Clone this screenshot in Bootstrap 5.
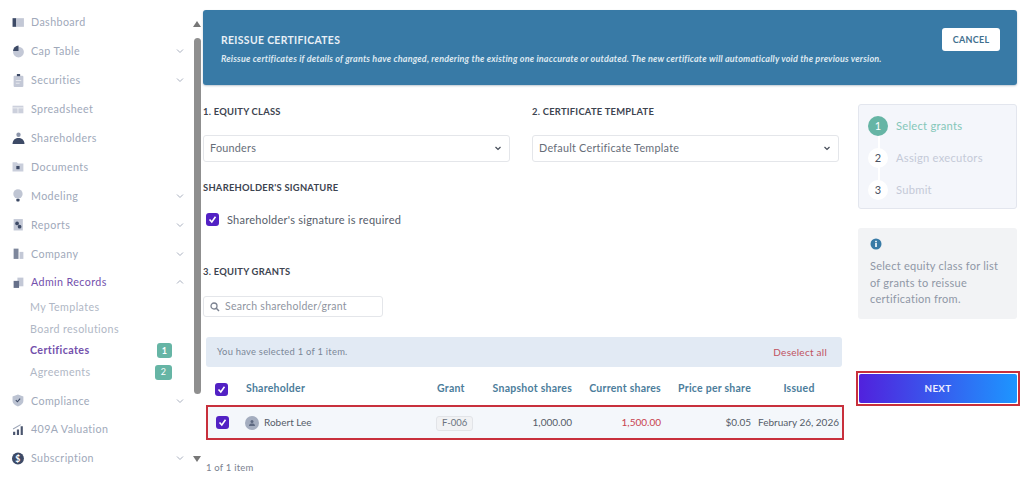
<!DOCTYPE html>
<html lang="en">
<head>
<meta charset="UTF-8">
<title>Reissue Certificates</title>
<link href="https://cdn.jsdelivr.net/npm/bootstrap@5.3.2/dist/css/bootstrap.min.css" rel="stylesheet">
<style>
    html, body { height: 480px; overflow: hidden; }
    body { background: #fff; font-family: "Lato", "Liberation Sans", sans-serif; font-size: 11px; color: #565d6a; letter-spacing: .25px; }
    .sidebar { width: 192px; padding-top: 8px; flex: none; }
    .side-item { height: 28.9px; padding-left: 12px; padding-right: 8px; color: #a0a9ba; font-size: 10.7px; letter-spacing: .4px; }
    .side-item svg.ic { width: 13px; height: 13px; margin-right: 6px; flex: none; }
    .side-item .chev { margin-left: auto; width: 8px; height: 8px; }
    .side-subs { margin-top: -1px; padding-bottom: 3px; }
    .side-sub { height: 21.8px; padding-left: 30px; padding-right: 20px; color: #b0b7c5; font-size: 10.7px; letter-spacing: .4px; }
    .side-active { color: #7350ac; font-weight: 700; }
    .side-admin { color: #7350ac; }
    .side-badge { background: #66b5a5; color: #fff; font-size: 9px; width: 15px; height: 15px; border-radius: 3px; }
    .side-badge-wide { width: 17px; }
    .scrollbar { width: 11px; flex: none; height: 480px; }
    .scrollbar .up { width: 0; height: 0; border: 4.5px solid transparent; border-top: 0; border-bottom: 6px solid #777; margin-top: 21px; margin-left: 1px; }
    .scrollbar .dn { width: 0; height: 0; border: 4.5px solid transparent; border-bottom: 0; border-top: 6px solid #777; margin-top: 62px; margin-left: 1px; }
    .scrollbar .thumb { width: 7px; height: 356px; background: #8f8f8f; border-radius: 4px; margin-top: 11px; margin-left: 2px; }
    .main-area { width: 814px; padding-top: 10px; flex: none; }
    .banner { height: 75px; background: #387aa6; border-radius: 3px; padding: 4px 17px 0 18px; color: #eaf1f6; box-shadow: 0 1px 2px rgba(40,70,100,.3); }
    .banner h1 { font-size: 10.4px; font-weight: 700; letter-spacing: .35px; margin: 0 0 6px; color: #e9f0f6; }
    .banner p { font-size: 9px; font-style: italic; font-weight: 700; margin: 0; letter-spacing: .18px; color: #dfe9f1; }
    .btn-cancel { width: 58px; height: 23px; margin-top: 14px; background: #fff; color: #3f6f8e; font-size: 9px; font-weight: 700; border: 0; border-radius: 3px; padding: 0; letter-spacing: .3px; }
    .left-col { width: 639px; flex: none; }
    .right-col { width: 159px; margin-left: 16px; flex: none; }
    .sec-title { font-size: 9.4px; font-weight: 700; color: #3d4450; margin: 0; letter-spacing: .25px; }
    .form-row-1 { margin-top: 21px; width: 636px; }
    .sec-1 { margin-bottom: 18px; }
    .sec-2 { margin-top: 20px; }
    .sig-row { margin: 18px 0 0 3px; }
    .sec-3 { margin-top: 38px; }
    .sel-box { height: 27px; border: 1px solid #e4e6ea; border-radius: 3px; font-size: 10.8px; padding: 0 7px 1px 6px; color: #666d78; width: 307px; }
    .check { width: 13px; height: 13px; background: #5221c4; border-radius: 3px; flex: none; }
    .check svg { width: 9px; height: 9px; }
    .check-cell { margin-left: 8px; }
    .search-box { width: 180px; height: 21px; margin-top: 19px; margin-bottom: 20px; border: 1px solid #e4e6ea; border-radius: 3px; color: #8f959f; font-size: 10.5px; padding: 0 6px; gap: 5px; }
    .sel-bar { margin-left: 3px; height: 30px; background: #e2eaf4; border-radius: 3px; padding: 0 15px 0 11px; font-size: 9.4px; color: #7b8798; }
    .deselect { color: #c0525f; font-size: 10px; }
    .grants { margin-left: 3px; width: 636px; border-collapse: collapse; table-layout: fixed; }
    .grants th { color: #4c7d9b; font-size: 10.5px; font-weight: 700; height: 39px; white-space: nowrap; padding: 6px 0 0; }
    .grants td { height: 33px; font-size: 10px; letter-spacing: 0; padding: 0; background: #f4f7fb; color: #555c68; white-space: nowrap; }
    .grants .issued { padding-left: 4px; }
    .grants .hl td { border-top: 2px solid #c8303c; border-bottom: 2px solid #c8303c; }
    .grants .hl td:first-child { border-left: 2px solid #c8303c; }
    .grants .hl td:last-child { border-right: 2px solid #c8303c; }
    .avatar { width: 14px; height: 14px; border-radius: 50%; background: #a4adbf; flex: none; margin-left: -1px; margin-right: 5px; }
    .chip { font-size: 9.5px; color: #6b7280; background: #f1f2f4; border: 1px solid #e2e4e8; border-radius: 3px; padding: 0 5px; height: 15px; display: inline-flex; align-items: center; margin-left: -1px; }
    .text-red { color: #c8434f !important; }
    .steps { height: 105px; margin-top: 19px; background: #f4f6fb; border: 1px solid #e3e6ee; border-radius: 3px; padding: 5px 9px; position: relative; }
    .step-row { height: 32px; font-size: 11.2px; color: #c5cad8; }
    .step-num { width: 20px; height: 20px; border-radius: 50%; background: #fff; color: #4a5160; margin-right: 8px; font-size: 11px; position: relative; z-index: 1; flex: none; }
    .step-on .step-num { background: #66b5a5; color: #fff; }
    .step-on { color: #84c7b9; }
    .step-line { position: absolute; left: 19px; top: 25px; width: 2px; height: 60px; background: #fff; }
    .info-box { margin-top: 19px; height: 91px; background: #f2f3f5; border-radius: 3px; padding: 10px 12px; color: #8f97a6; font-size: 11px; line-height: 16.5px; }
    .info-box svg { width: 12px; height: 12px; display: block; margin-bottom: 8px; }
    .next-wrap { margin-top: 52px; margin-left: -2px; width: 164px; border: 2px solid #c8303c; padding: 1px; background: #fff; }
    .btn-next { display: block; width: 100%; height: 29px; padding: 0; border: 0; background: linear-gradient(90deg, #5121dd, #1d96ff); color: #eef; font-size: 9.8px; font-weight: 700; border-radius: 2px; letter-spacing: .3px; }
    .pager { margin: 21px 0 0 3px; font-size: 9.5px; letter-spacing: .2px; color: #7b8290; }
</style>
</head>
<body>
<div class="d-flex">
    <!-- Sidebar -->
    <nav class="sidebar">
        <div class="side-item d-flex align-items-center"><svg class="ic" viewBox="0 0 12 12"><rect x=".5" y="2" width="3.500" height="8" fill="#3d4a66"/><rect x="4" y="2" width="7" height="8" fill="#c3c8d6"/></svg>Dashboard</div>
        <div class="side-item d-flex align-items-center"><svg class="ic" viewBox="0 0 12 12"><circle cx="6" cy="6.500" r="5" fill="#c3c8d6"/><path d="M6 .5A5 5 0 0 0 1 5.500H6Z" fill="#3d4a66"/></svg>Cap Table<svg class="chev" viewBox="0 0 8 8"><path d="M1 2.500 4 5.500 7 2.500" fill="none" stroke="#a9b0bf"/></svg></div>
        <div class="side-item d-flex align-items-center"><svg class="ic" viewBox="0 0 12 12"><rect x="1.500" y="1.500" width="9" height="10.500" rx="1" fill="#c3c8d6"/><rect x="4.500" y="0" width="3" height="2" fill="#3d4a66"/><path d="M3.500 6H8.500M3.500 8.500H7" stroke="#e6e8ee"/></svg>Securities<svg class="chev" viewBox="0 0 8 8"><path d="M1 2.500 4 5.500 7 2.500" fill="none" stroke="#a9b0bf"/></svg></div>
        <div class="side-item d-flex align-items-center"><svg class="ic" viewBox="0 0 12 12"><rect x=".5" y="2.500" width="10" height="7" fill="#ccd0dc"/><path d="M.5 4.500H10.500M5.500 4.500V9.500" stroke="#fff" stroke-width=".6"/></svg>Spreadsheet</div>
        <div class="side-item d-flex align-items-center"><svg class="ic" viewBox="0 0 12 12"><circle cx="6" cy="2.500" r="2" fill="#8d96ab"/><path d="M.5 11C.5 7 3.500 5.500 6 5.500S11.500 7 11.500 11Z" fill="#3d4a66"/></svg>Shareholders</div>
        <div class="side-item d-flex align-items-center"><svg class="ic" viewBox="0 0 12 12"><path d="M.5 2H4.500L5.500 3.200H10.500V10.500H.5Z" fill="#c9cedb"/><rect x="4" y="5.500" width="3" height="3" fill="#3d4a66"/></svg>Documents</div>
        <div class="side-item d-flex align-items-center"><svg class="ic" viewBox="0 0 12 12"><circle cx="5.500" cy="4.500" r="4.300" fill="#bfc5d3"/><rect x="4" y="9" width="3" height="2.500" rx=".8" fill="#3d4a66"/></svg>Modeling<svg class="chev" viewBox="0 0 8 8"><path d="M1 2.500 4 5.500 7 2.500" fill="none" stroke="#a9b0bf"/></svg></div>
        <div class="side-item d-flex align-items-center"><svg class="ic" viewBox="0 0 12 12"><rect x="1.500" y="1" width="8.500" height="10.500" fill="#c3c8d6"/><circle cx="4.700" cy="5" r="1.700" fill="#3d4a66"/><circle cx="7" cy="8" r="1.700" fill="#3d4a66"/></svg>Reports<svg class="chev" viewBox="0 0 8 8"><path d="M1 2.500 4 5.500 7 2.500" fill="none" stroke="#a9b0bf"/></svg></div>
        <div class="side-item d-flex align-items-center"><svg class="ic" viewBox="0 0 12 12"><rect x="1.500" y="1.500" width="4.500" height="9.500" fill="#7e879c"/><rect x="7" y="4.500" width="3.500" height="6.500" fill="#c3c8d6"/></svg>Company<svg class="chev" viewBox="0 0 8 8"><path d="M1 2.500 4 5.500 7 2.500" fill="none" stroke="#a9b0bf"/></svg></div>
        <div class="side-item side-admin d-flex align-items-center"><svg class="ic" viewBox="0 0 12 12"><rect x="5" y="1.500" width="5.500" height="8" fill="#c3c8d6"/><rect x="1.500" y="4.500" width="5" height="6.500" fill="#66708a"/></svg>Admin Records<svg class="chev" viewBox="0 0 8 8"><path d="M1 5.500 4 2.500 7 5.500" fill="none" stroke="#a9b0bf"/></svg></div>
        <div class="side-subs">
            <div class="side-sub d-flex align-items-center">My Templates</div>
            <div class="side-sub d-flex align-items-center">Board resolutions</div>
            <div class="side-sub side-active d-flex align-items-center justify-content-between">Certificates<span class="side-badge d-flex align-items-center justify-content-center">1</span></div>
            <div class="side-sub d-flex align-items-center justify-content-between">Agreements<span class="side-badge side-badge-wide d-flex align-items-center justify-content-center">2</span></div>
        </div>
        <div class="side-item d-flex align-items-center"><svg class="ic" viewBox="0 0 12 12"><path d="M5.500 .5 10.500 2.200V6C10.500 9 8 10.500 5.500 11.500 3 10.500 .5 9 .5 6V2.200Z" fill="#bcc3d2"/><path d="M3.500 5.700 5 7.200 7.500 4.200" fill="none" stroke="#3d4a66"/></svg>Compliance<svg class="chev" viewBox="0 0 8 8"><path d="M1 2.500 4 5.500 7 2.500" fill="none" stroke="#a9b0bf"/></svg></div>
        <div class="side-item d-flex align-items-center"><svg class="ic" viewBox="0 0 12 12"><path d="M1 11V8H3V11ZM4.500 11V6H6.500V11ZM8 11V3H10V11Z" fill="#4a556e"/><path d="M1 5.500 8 1.500" stroke="#9aa3b5"/></svg>409A Valuation</div>
        <div class="side-item d-flex align-items-center"><svg class="ic" viewBox="0 0 12 12"><circle cx="5.500" cy="6" r="5.500" fill="#3d4a66"/><text x="5.500" y="9" font-size="8" font-weight="700" text-anchor="middle" fill="#fff">$</text></svg>Subscription<svg class="chev" viewBox="0 0 8 8"><path d="M1 2.500 4 5.500 7 2.500" fill="none" stroke="#a9b0bf"/></svg></div>
    </nav>

    <!-- Scrollbar -->
    <div class="scrollbar">
        <div class="up"></div>
        <div class="thumb"></div>
        <div class="dn"></div>
    </div>

    <!-- Main -->
    <div class="main-area">
        <div class="banner d-flex align-items-center justify-content-between">
            <div>
                <h1>REISSUE CERTIFICATES</h1>
                <p>Reissue certificates if details of grants have changed, rendering the existing one inaccurate or outdated. The new certificate will automatically void the previous version.</p>
            </div>
            <button class="btn-cancel align-self-start">CANCEL</button>
        </div>
        <div class="d-flex">
            <div class="left-col">
                <div class="d-flex justify-content-between form-row-1">
                    <div>
                        <h2 class="sec-title sec-1">1. EQUITY CLASS</h2>
                        <div class="sel-box d-flex align-items-center justify-content-between">Founders<svg width="8" height="8" viewBox="0 0 8 8"><path d="M1.500 3 4 5.500 6.500 3" fill="none" stroke="#444b57" stroke-width="1.200"/></svg></div>
                    </div>
                    <div>
                        <h2 class="sec-title sec-1">2. CERTIFICATE TEMPLATE</h2>
                        <div class="sel-box d-flex align-items-center justify-content-between">Default Certificate Template<svg width="8" height="8" viewBox="0 0 8 8"><path d="M1.500 3 4 5.500 6.500 3" fill="none" stroke="#444b57" stroke-width="1.200"/></svg></div>
                    </div>
                </div>
                <h2 class="sec-title sec-2">SHAREHOLDER'S SIGNATURE</h2>
                <div class="d-flex align-items-center gap-2 sig-row">
                    <span class="check d-flex align-items-center justify-content-center"><svg viewBox="0 0 9 9"><path d="M1.500 4.500 3.800 7 7.500 1.800" fill="none" stroke="#fff" stroke-width="1.600"/></svg></span>
                    <span>Shareholder's signature is required</span>
                </div>
                <h2 class="sec-title sec-3">3. EQUITY GRANTS</h2>
                <div class="search-box d-flex align-items-center">
                    <svg width="10" height="10" viewBox="0 0 10 10"><circle cx="4" cy="4" r="3" fill="none" stroke="#7b8290" stroke-width="1.300"/><path d="M6.300 6.300 9 9" stroke="#7b8290" stroke-width="1.500"/></svg>
                    <span>Search shareholder/grant</span>
                </div>
                <div class="sel-bar d-flex align-items-center justify-content-between">
                    <span>You have selected 1 of 1 item.</span>
                    <span class="deselect">Deselect all</span>
                </div>
                <table class="grants">
                    <colgroup><col style="width:39px"><col style="width:191px"><col style="width:40px"><col style="width:95px"><col style="width:89px"><col style="width:90px"><col style="width:92px"></colgroup>
                    <thead>
                        <tr>
                            <th><span class="check check-cell d-flex align-items-center justify-content-center"><svg viewBox="0 0 9 9"><path d="M1.500 4.500 3.800 7 7.500 1.800" fill="none" stroke="#fff" stroke-width="1.600"/></svg></span></th>
                            <th>Shareholder</th>
                            <th>Grant</th>
                            <th class="text-end">Snapshot shares</th>
                            <th class="text-end">Current shares</th>
                            <th class="text-end">Price per share</th>
                            <th class="text-center issued">Issued</th>
                        </tr>
                    </thead>
                    <tbody>
                        <tr class="hl">
                            <td><span class="check check-cell d-flex align-items-center justify-content-center"><svg viewBox="0 0 9 9"><path d="M1.500 4.500 3.800 7 7.500 1.800" fill="none" stroke="#fff" stroke-width="1.600"/></svg></span></td>
                            <td><div class="d-flex align-items-center"><span class="avatar d-flex align-items-center justify-content-center"><svg width="8" height="8" viewBox="0 0 8 8"><circle cx="4" cy="2.500" r="1.500" fill="#5d6880"/><path d="M1 7C1 5 2.500 4.500 4 4.500S7 5 7 7Z" fill="#5d6880"/></svg></span>Robert Lee</div></td>
                            <td><span class="chip">F-006</span></td>
                            <td class="text-end">1,000.00</td>
                            <td class="text-end text-red">1,500.00</td>
                            <td class="text-end">$0.05</td>
                            <td class="text-center issued">February 26, 2026</td>
                        </tr>
                    </tbody>
                </table>
                <div class="pager">1 of 1 item</div>
            </div>
            <div class="right-col">
                <div class="steps">
                    <div class="step-line"></div>
                    <div class="step-row step-on d-flex align-items-center"><span class="step-num d-flex align-items-center justify-content-center">1</span>Select grants</div>
                    <div class="step-row d-flex align-items-center"><span class="step-num d-flex align-items-center justify-content-center">2</span>Assign executors</div>
                    <div class="step-row d-flex align-items-center"><span class="step-num d-flex align-items-center justify-content-center">3</span>Submit</div>
                </div>
                <div class="info-box">
                    <svg viewBox="0 0 12 12"><circle cx="6" cy="6" r="5.500" fill="#387aa6"/><rect x="5.200" y="5" width="1.600" height="4" fill="#fff"/><rect x="5.200" y="2.800" width="1.600" height="1.500" fill="#fff"/></svg>
                    Select equity class for list of grants to reissue certification from.
                </div>
                <div class="next-wrap"><button class="btn-next">NEXT</button></div>
            </div>
        </div>
    </div>
</div>
<script src="https://cdn.jsdelivr.net/npm/bootstrap@5.3.2/dist/js/bootstrap.bundle.min.js"></script>
</body>
</html>
